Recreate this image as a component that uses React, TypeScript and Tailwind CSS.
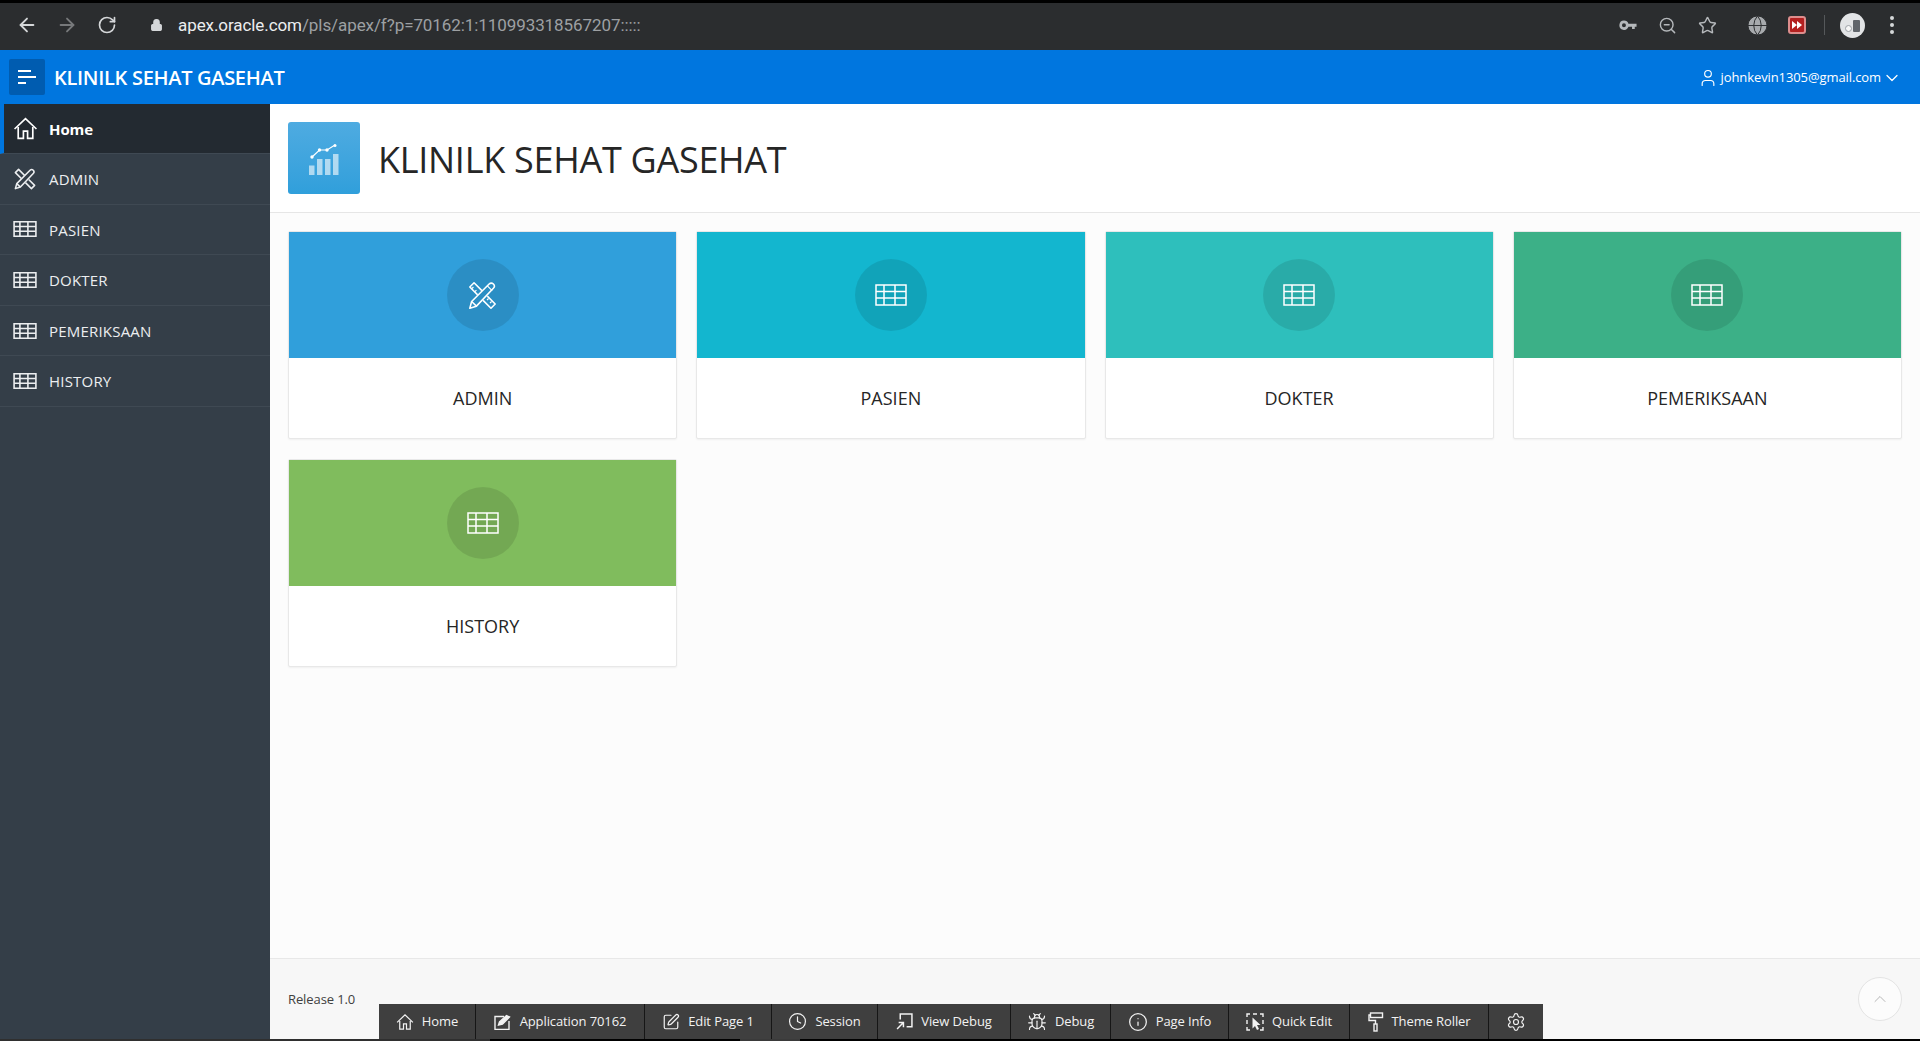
import { ArrowLeft, ArrowRight, RotateCw, Lock, ZoomOut, Star, Globe, User, ChevronDown, ChevronUp, Bug, Clock, Info, Settings, SquarePen } from "lucide-react";

const font = "font-['Open_Sans',sans-serif]";

function HomeIcon({ className }: { className?: string }) {
  return (
    <svg viewBox="0 0 24 24" fill="none" stroke="currentColor" strokeWidth="1.6" strokeLinejoin="miter" className={className}>
      <path d="M1.5 12.5 12 2.5l10.5 10" />
      <path d="M5 10.5V21.5h5v-7h4v7h5V10.5" />
    </svg>
  );
}

function TableIcon({ className, sw = 1.5 }: { className?: string; sw?: number }) {
  return (
    <svg viewBox="0 0 32 22" fill="none" stroke="currentColor" strokeWidth={sw} className={className}>
      <rect x="1" y="1" width="30" height="20" />
      <path d="M1 7.5h30M1 14h30M9 1v20M20 1v20" />
    </svg>
  );
}

function ToolsIcon({ className, ticks, sw = 1.7 }: { className?: string; ticks?: boolean; sw?: number }) {
  return (
    <svg viewBox="0 0 24 24" fill="none" stroke="currentColor" strokeWidth={sw} strokeLinejoin="round" className={className}>
      <path d="M8 11.500 1.500 5 5 1.500l6.500 6.500M12.500 16l6.500 6.500 3.500-3.500L16 12.500" />
      <path d="M1.500 22.500 3 17 17.500 2.500c1-1 2.500-1 3.500 0s1 2.500 0 3.500L7 20.800z" />
      <path d="M3 17l4 3.800" />
      {ticks && <path d="M16 4l4 4M4.500 5l-1.300 1.300M7 7.500 5.700 8.800M17 14.500l-1.300 1.300M19.500 17l-1.300 1.300" strokeWidth="1" />}
    </svg>
  );
}

function ChartIcon() {
  return (
    <svg viewBox="0 0 30 31" className="w-[30px] h-[31px] mt-[2px]">
      <g fill="#fff" opacity="0.6">
        <rect x="0" y="21.500" width="5.500" height="9.500" />
        <rect x="8" y="15" width="5.500" height="16" />
        <rect x="16" y="15" width="5.500" height="16" />
        <rect x="24" y="10" width="5.500" height="21" />
      </g>
      <path d="M3 13 10.500 6 18 6 26 1" stroke="#fff" strokeWidth="1.200" fill="none" />
      <g fill="#fff">
        <circle cx="3" cy="13" r="1.700" />
        <circle cx="10.500" cy="6" r="1.700" />
        <circle cx="18" cy="6" r="1.700" />
        <circle cx="26" cy="1.500" r="1.500" />
      </g>
    </svg>
  );
}

function KeyIcon() {
  return (
    <svg viewBox="0 0 20 12" className="w-[18px] h-[11px]" fill="#b5b8bb">
      <path fillRule="evenodd" d="M5.500 0.500a5.200 5.200 0 0 1 5 3.500H19.500v3.500h-2v2.500h-3V7.500h-4a5.200 5.200 0 1 1-5-7zm0 3a2.200 2.200 0 1 0 0 4.400 2.200 2.200 0 0 0 0-4.400z" />
    </svg>
  );
}

function AppIcon({ className }: { className?: string }) {
  return (
    <svg viewBox="0 0 18 16" fill="none" stroke="currentColor" strokeWidth="1.400" className={className}>
      <path d="M10 2.500H1v13h14V7" />
      <path d="M4.500 11 5.500 8 12.500 1.500l3 1.500-7 7z" fill="currentColor" />
    </svg>
  );
}

function ViewDebugIcon({ className }: { className?: string }) {
  return (
    <svg viewBox="0 0 16 16" fill="none" stroke="currentColor" strokeWidth="1.400" className={className}>
      <path d="M4 6V1h11v12h-5" />
      <path d="M1 15l6-6M2.500 9H7v4.500" />
    </svg>
  );
}

function QuickEditIcon({ className }: { className?: string }) {
  return (
    <svg viewBox="0 0 18 18" fill="none" stroke="currentColor" strokeWidth="1.400" className={className}>
      <path d="M4 1H1v3M7 1h4M14 1h3v3M1 7v4M17 7v4M1 14v3h3M14 17h3v-3" />
      <path d="M6.500 4.500v11l2.500-2.500 2 4 2-1-2-4h3.500z" fill="currentColor" stroke="none" />
    </svg>
  );
}

function RollerIcon({ className }: { className?: string }) {
  return (
    <svg viewBox="0 0 16 20" fill="none" stroke="currentColor" strokeWidth="1.400" className={className}>
      <rect x="2.500" y="1" width="12" height="4.500" />
      <path d="M2.500 3H1v5.500h6.500V12" />
      <rect x="6" y="12" width="3" height="7" />
    </svg>
  );
}

const sideItems = [
  { label: "ADMIN", icon: <ToolsIcon className="w-[22px] h-[22px]" /> },
  { label: "PASIEN", icon: <TableIcon className="w-[24px] h-[16px]" sw={2.2} /> },
  { label: "DOKTER", icon: <TableIcon className="w-[24px] h-[16px]" sw={2.2} /> },
  { label: "PEMERIKSAAN", icon: <TableIcon className="w-[24px] h-[16px]" sw={2.2} /> },
  { label: "HISTORY", icon: <TableIcon className="w-[24px] h-[16px]" sw={2.2} /> },
];

const cards = [
  { label: "ADMIN", bg: "bg-[#309fdb]", tools: true },
  { label: "PASIEN", bg: "bg-[#13b6cf]" },
  { label: "DOKTER", bg: "bg-[#2ebfbc]" },
  { label: "PEMERIKSAAN", bg: "bg-[#3cb087]" },
  { label: "HISTORY", bg: "bg-[#80bc5d]" },
];

const devItems = [
  { label: "Home", w: "w-[97px]", icon: <HomeIcon className="w-[18px] h-[18px]" /> },
  { label: "Application 70162", w: "w-[169px]", icon: <AppIcon className="w-[18px] h-[16px]" /> },
  { label: "Edit Page 1", w: "w-[127px]", icon: <SquarePen className="w-[18px] h-[18px]" strokeWidth={1.6} /> },
  { label: "Session", w: "w-[106px]", icon: <Clock className="w-[19px] h-[19px]" strokeWidth={1.5} /> },
  { label: "View Debug", w: "w-[133px]", icon: <ViewDebugIcon className="w-[17px] h-[17px]" /> },
  { label: "Debug", w: "w-[100px]", icon: <Bug className="w-[20px] h-[20px]" strokeWidth={1.4} /> },
  { label: "Page Info", w: "w-[118px]", icon: <Info className="w-[20px] h-[20px]" strokeWidth={1.5} /> },
  { label: "Quick Edit", w: "w-[121px]", icon: <QuickEditIcon className="w-[18px] h-[18px]" /> },
  { label: "Theme Roller", w: "w-[139px]", icon: <RollerIcon className="w-[16px] h-[20px]" /> },
];

export default function App() {
  return (
    <div className={`relative h-[1041px] w-[1920px] flex flex-col overflow-hidden bg-white ${font}`}>
      {/* browser bar */}
      <div className="h-[50px] shrink-0 border-t-[3px] border-black bg-[#2b2d2f] pb-[3px] flex items-center text-[#d5d7d9]">
        <div className="w-[150px] pl-[16px] flex items-center gap-[18px]">
          <ArrowLeft className="w-[22px] h-[22px]" strokeWidth={2} />
          <ArrowRight className="w-[22px] h-[22px] text-[#77797b]" strokeWidth={2} />
          <RotateCw className="w-[20px] h-[20px] ml-[1px]" strokeWidth={2} />
        </div>
        <Lock className="w-[13px] h-[14px] fill-[#d5d7d9] text-[#d5d7d9]" />
        <div className="ml-[15px] mt-[1px] text-[17px] tracking-[-0.08px] text-[#9da0a3] font-['Roboto',sans-serif]">
          <span className="text-[#eceef0]">apex.oracle.com</span>/pls/apex/f?p=70162:1:110993318567207:::::
        </div>
        <div className="ml-auto flex items-center text-[#b5b8bb]">
          <KeyIcon />
          <ZoomOut className="ml-[21px] w-[19px] h-[19px]" strokeWidth={1.8} />
          <Star className="ml-[21px] w-[19px] h-[19px]" strokeWidth={1.8} />
          <Globe className="ml-[29px] w-[23px] h-[23px] text-[#2b2d2f] fill-[#a7aaad]" strokeWidth={1} />
          <div className="ml-[19px] w-[18px] h-[18px] rounded-[3px] bg-[#b32020] border-2 border-[#dd8d8d] flex items-center justify-center">
            <svg viewBox="0 0 12 8" className="w-[12px] h-[8px]" fill="#fff">
              <path d="M1 0l5 4-5 4zM6 0l5 4-5 4z" />
            </svg>
          </div>
          <div className="ml-[18px] w-px h-[20px] bg-[#55585a]" />
          <div className="ml-[15px] w-[25px] h-[25px] rounded-full bg-[#e2e4e6] flex items-end justify-center gap-[1px] pb-[6px]">
            <div className="w-[7px] h-[7px] rounded-full bg-[#f7f7f7] border border-[#9aa0a6]" />
            <div className="w-[7px] h-[12px] bg-[#60656b] rounded-[1px]" />
          </div>
          <div className="ml-[25px] mr-[26px] flex flex-col gap-[3px]">
            <div className="w-[4px] h-[4px] rounded-full bg-[#d5d7d9]" />
            <div className="w-[4px] h-[4px] rounded-full bg-[#d5d7d9]" />
            <div className="w-[4px] h-[4px] rounded-full bg-[#d5d7d9]" />
          </div>
        </div>
      </div>

      {/* app header */}
      <header className="h-[54px] shrink-0 bg-[#0076df] flex items-center text-white">
        <div className="ml-[9px] w-[36px] h-[36px] rounded-[2px] bg-[#005cb0] flex flex-col justify-center pl-[9px] gap-[4px]">
          <div className="w-[13px] h-[2px] bg-white" />
          <div className="w-[18px] h-[2px] bg-white" />
          <div className="w-[8px] h-[2px] bg-white" />
        </div>
        <div className="ml-[9px] mt-[2px] text-[20px] font-semibold tracking-[-0.3px]">KLINILK SEHAT GASEHAT</div>
        <div className="ml-auto mr-[18px] mt-[1px] flex items-center text-[13px] tracking-[-0.1px]">
          <User className="w-[20px] h-[20px] mr-[3px]" strokeWidth={1.4} />
          johnkevin1305@gmail.com
          <ChevronDown className="w-[20px] h-[20px] ml-[1px]" strokeWidth={1.5} />
        </div>
      </header>

      <div className="flex-1 min-h-0 flex">
        {/* side nav */}
        <nav className="w-[270px] shrink-0 bg-[#343e48] text-[#eceef0]">
          <div className="h-[50px] bg-[#232a31] border-l-[4px] border-[#0076df] border-b border-b-[#3f4953] flex items-center text-white">
            <HomeIcon className="ml-[9px] w-[25px] h-[25px]" />
            <span className="ml-[11px] pt-[1px] text-[15px] font-bold tracking-[-0.1px]">Home</span>
          </div>
          {sideItems.map((item) => (
            <div key={item.label} className="h-[50.6px] border-b border-[#3f4953] flex items-center">
              <div className="w-[49px] flex justify-center">{item.icon}</div>
              <span className="pt-[1px] text-[15px] tracking-[0.2px]">{item.label}</span>
            </div>
          ))}
        </nav>

        <main className="flex-1 min-w-0 flex flex-col bg-[#fcfcfc]">
          <div className="h-[109px] shrink-0 bg-white border-b border-[#e6e6e6] flex items-center pl-[18px]">
            <div className="w-[72px] h-[72px] rounded-[3px] bg-gradient-to-b from-[#4eabe1] to-[#309fdb] flex items-center justify-center">
              <ChartIcon />
            </div>
            <h1 className="ml-[18px] mt-[4px] text-[36px] leading-none text-[#262626] tracking-[-0.28px]">KLINILK SEHAT GASEHAT</h1>
          </div>

          <div className="flex-1 grid grid-cols-4 gap-x-[19px] gap-y-[20px] content-start pl-[18px] pr-[18px] pt-[18px]">
            {cards.map((card) => (
              <div key={card.label} className="h-[208px] bg-white border border-[#e8e8e8] rounded-[2px] shadow-[0_1px_2px_rgba(0,0,0,0.05)] flex flex-col">
                <div className={`h-[126px] ${card.bg} flex items-center justify-center`}>
                  <div className="w-[72px] h-[72px] rounded-full bg-black/10 flex items-center justify-center text-white">
                    {card.tools ? <ToolsIcon className="w-[29px] h-[29px]" ticks sw={1.3} /> : <TableIcon className="w-[32px] h-[22px]" />}
                  </div>
                </div>
                <div className="flex-1 flex items-center justify-center text-[18px] font-medium text-[#262626]">{card.label}</div>
              </div>
            ))}
          </div>

          <footer className="h-[81px] shrink-0 bg-[#f7f7f7] border-t border-[#e8e8e8] relative pl-[18px] pt-[27px]">
            <span className="text-[13px] text-[#404040] tracking-[-0.1px]">Release 1.0</span>
            <div className="absolute right-[18px] top-[18px] w-[44px] h-[44px] rounded-full border border-[#e4e4e4] bg-[#fcfcfc] flex items-center justify-center text-[#a8a8a8]">
              <ChevronUp className="w-[20px] h-[20px]" strokeWidth={1} />
            </div>
          </footer>
        </main>
      </div>

      {/* bottom edge */}
      <div className="h-[2px] shrink-0 flex bg-black">
        <div className="w-[490px] bg-[#2f2f2f]" />
        <div className="w-[250px]" />
        <div className="w-[60px] bg-[#3a3a3a]" />
      </div>

      {/* developer toolbar */}
      <div className="absolute left-[379px] bottom-[2px] h-[35px] flex bg-[#3f3f3f] text-[#f2f2f2] text-[13px] tracking-[-0.1px]">
        {devItems.map((item) => (
          <div key={item.label} className={`${item.w} border-r border-[#161616] flex items-center justify-center gap-[8px]`}>
            {item.icon}
            <span>{item.label}</span>
          </div>
        ))}
        <div className="w-[54px] flex items-center justify-center">
          <Settings className="w-[20px] h-[20px]" strokeWidth={1.4} />
        </div>
      </div>
    </div>
  );
}
